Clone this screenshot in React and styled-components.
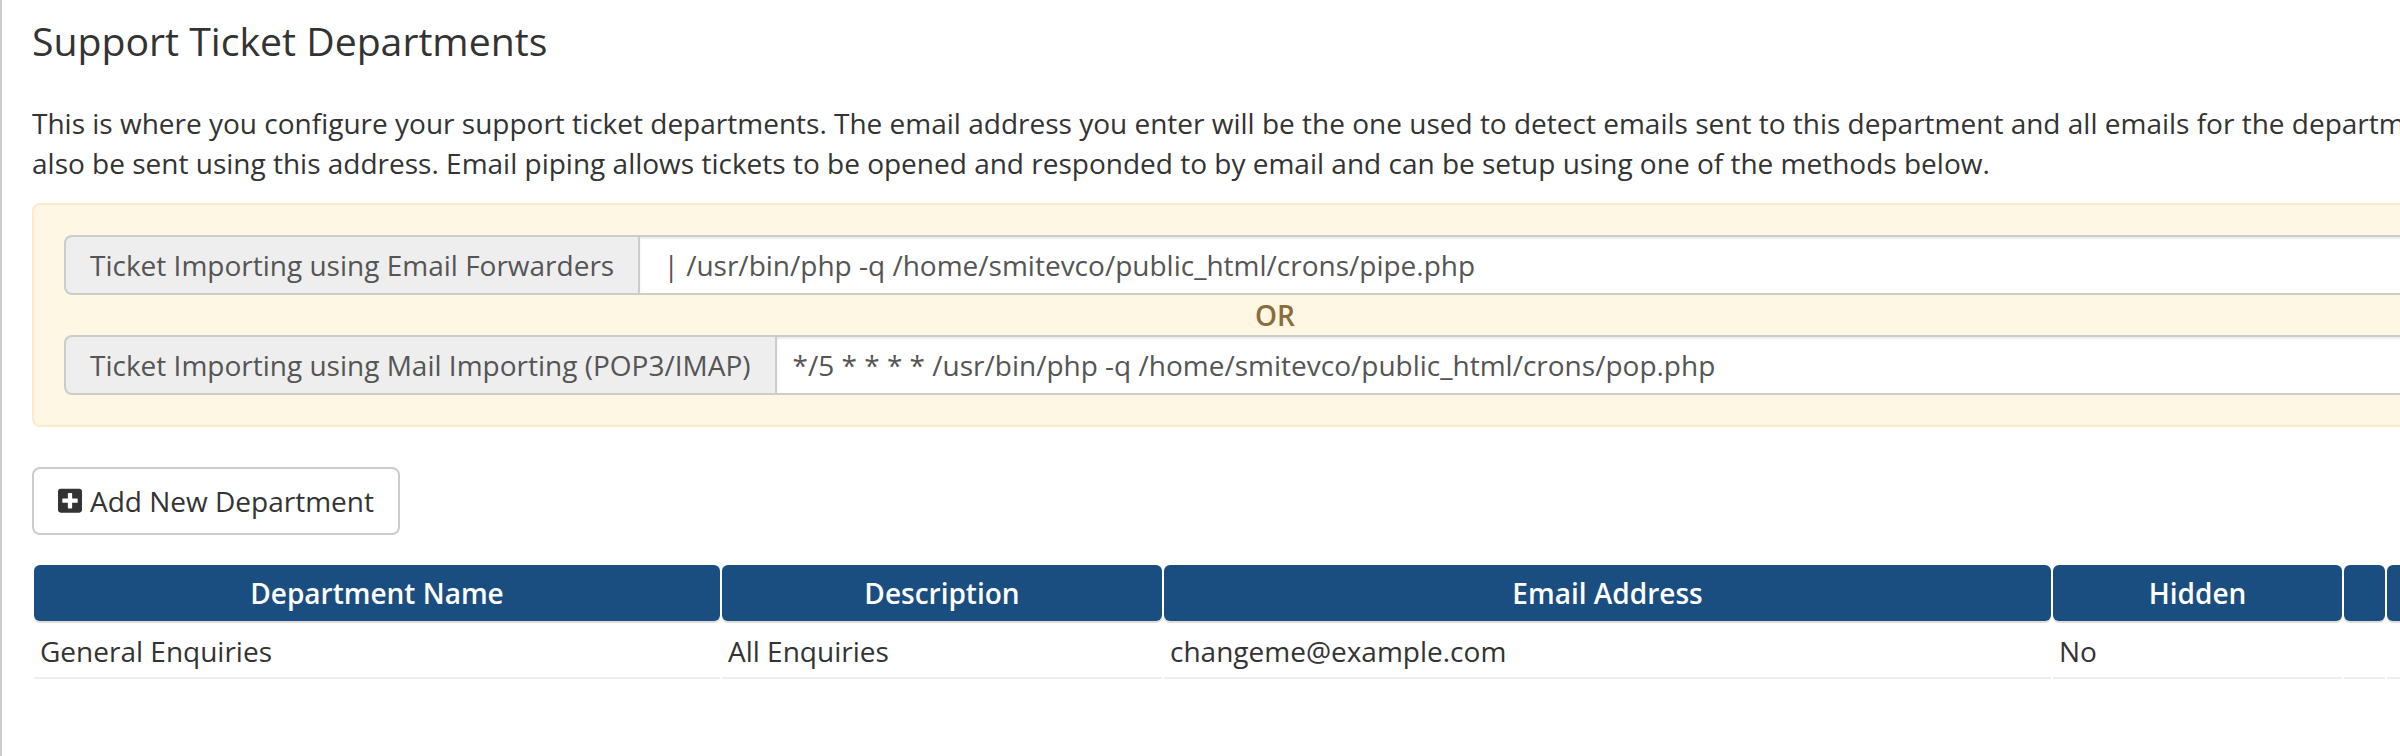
import React from "react";
import styled, { createGlobalStyle } from "styled-components";
import { FaPlusSquare } from "react-icons/fa";

const Global = createGlobalStyle`
  html, body { margin: 0; padding: 0; background: #fff; overflow: hidden; }
  body { font-family: "Open Sans", "Noto Sans", sans-serif; color: #333; }
`;

const Page = styled.div`
  width: 2518px;
  height: 756px;
  box-sizing: border-box;
  border-left: 2px solid #ccc;
  padding: 0 0 0 30px;
  overflow: hidden;
`;

const Title = styled.h1`
  margin: 0;
  padding-top: 18px;
  height: 103px;
  box-sizing: border-box;
  font-size: 39.2px;
  line-height: 46px;
  font-weight: 400;
  color: #333;
`;

const Intro = styled.p`
  margin: 0 0 20px;
  font-size: 28px;
  line-height: 40px;
  color: #333;
`;

const Notice = styled.div`
  box-sizing: border-box;
  height: 224px;
  padding: 30px 30px;
  background: #fdf7e3;
  border: 2px solid #faebcc;
  border-radius: 8px;
  display: flex;
  flex-direction: column;
`;

const InputGroup = styled.div`
  display: flex;
  height: 60px;
`;

const Addon = styled.span`
  box-sizing: border-box;
  flex: none;
  display: flex;
  align-items: center;
  padding: 0 24px;
  background: #eee;
  border: 2px solid #ccc;
  border-right: 0;
  border-radius: 8px 0 0 8px;
  font-size: 28px;
  color: #555;
`;

const Field = styled.input`
  box-sizing: border-box;
  flex: 1;
  min-width: 0;
  height: 60px;
  padding: 0 16px;
  background: #fff;
  border: 2px solid #ccc;
  border-radius: 0;
  box-shadow: inset 0 2px 2px rgba(0, 0, 0, 0.075);
  font-family: inherit;
  font-size: 28px;
  color: #555;
  outline: none;
`;

const Or = styled.div`
  height: 40px;
  line-height: 40px;
  text-align: center;
  font-size: 28px;
  font-weight: 600;
  color: #8a6d3b;
`;

const Action = styled.button`
  box-sizing: border-box;
  display: flex;
  align-items: center;
  gap: 8px;
  height: 68px;
  margin: 40px 0 30px;
  padding: 0 24px;
  background: #fff;
  border: 2px solid #ccc;
  border-radius: 8px;
  font-family: inherit;
  font-size: 28px;
  color: #333;
  svg { height: 27.4px; width: 24px; flex: none; }
`;

const Table = styled.table`
  table-layout: fixed;
  width: 2417px;
  border-collapse: separate;
  border-spacing: 2px 0;
  font-size: 28px;
`;

const Head = styled.th`
  height: 56px;
  padding: 0;
  background: #1a4d80;
  border-radius: 6px;
  box-shadow: 0 2px 0 #ddd;
  color: #fff;
  font-weight: 600;
  font-size: 28px;
  text-align: center;
`;

const Cell = styled.td`
  height: 58px;
  box-sizing: border-box;
  padding: 4px 6px 0;
  border-bottom: 2px solid #eee;
  color: #333;
`;

const columns = [
  { name: "Department Name", width: 686, value: "General Enquiries" },
  { name: "Description", width: 440, value: "All Enquiries" },
  { name: "Email Address", width: 887, value: "changeme@example.com" },
  { name: "Hidden", width: 289, value: "No" },
  { name: "", width: 41, value: "" },
  { name: "", width: 60, value: "" },
];

export default function App() {
  return (
    <Page>
      <Global />
      <Title>Support Ticket Departments</Title>
      <Intro>
        This is where you configure your support ticket departments. The email address you enter will be the one used to detect emails sent to this department and all emails for the department will
        <br />
        also be sent using this address. Email piping allows tickets to be opened and responded to by email and can be setup using one of the methods below.
      </Intro>
      <Notice>
        <InputGroup>
          <Addon>Ticket Importing using Email Forwarders</Addon>
          <Field readOnly value=" | /usr/bin/php -q /home/smitevco/public_html/crons/pipe.php" />
        </InputGroup>
        <Or>OR</Or>
        <InputGroup>
          <Addon>Ticket Importing using Mail Importing (POP3/IMAP)</Addon>
          <Field readOnly value="*/5 * * * * /usr/bin/php -q /home/smitevco/public_html/crons/pop.php" />
        </InputGroup>
      </Notice>
      <Action type="button">
        <FaPlusSquare />
        Add New Department
      </Action>
      <Table>
        <colgroup>
          {columns.map((c, i) => (
            <col key={i} style={{ width: c.width }} />
          ))}
        </colgroup>
        <thead>
          <tr>
            {columns.map((c, i) => (
              <Head key={i}>{c.name}</Head>
            ))}
          </tr>
        </thead>
        <tbody>
          <tr>
            {columns.map((c, i) => (
              <Cell key={i}>{c.value}</Cell>
            ))}
          </tr>
        </tbody>
      </Table>
    </Page>
  );
}
